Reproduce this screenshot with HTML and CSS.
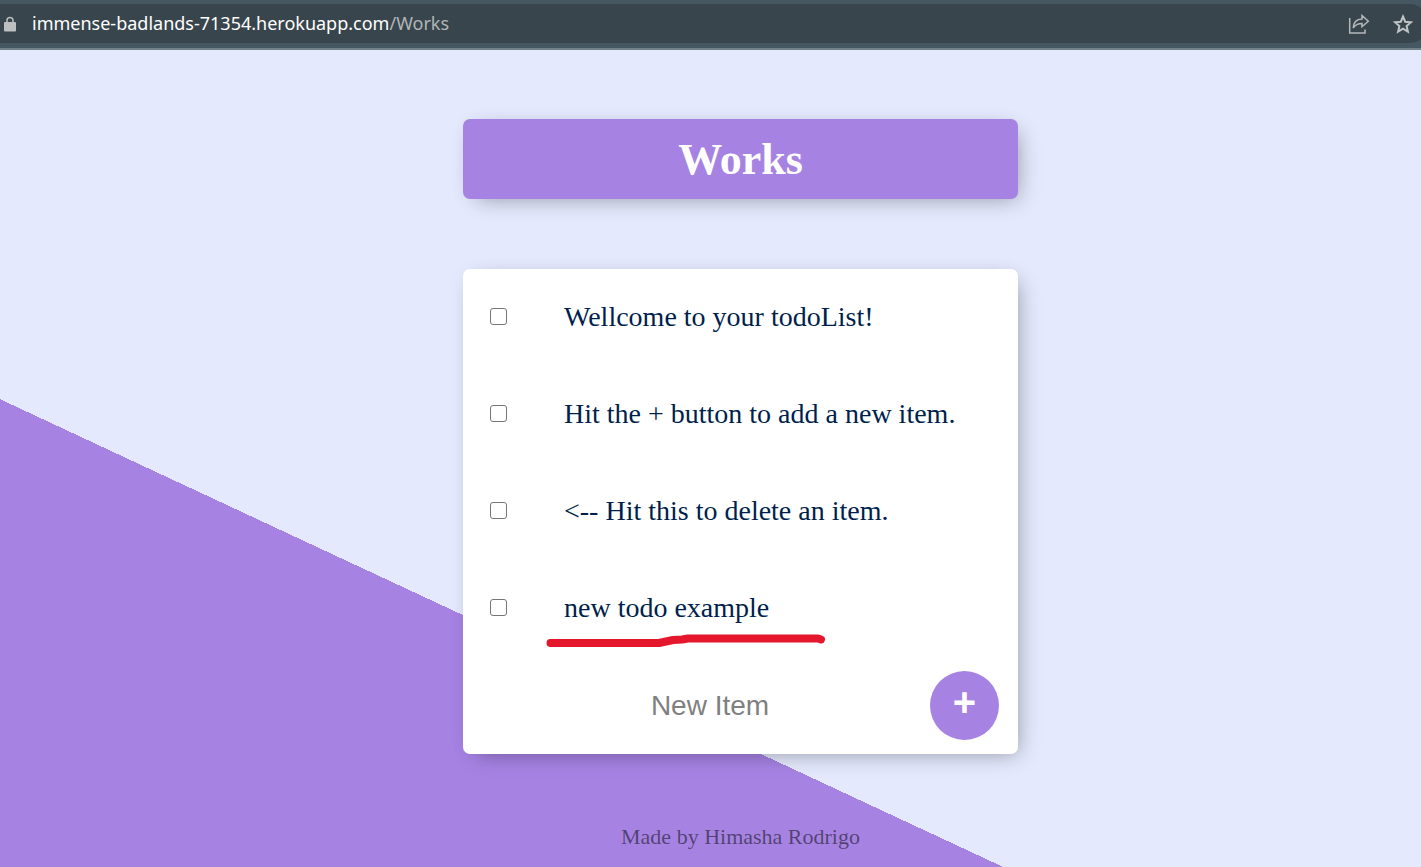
FILE: index.html
```html
<!DOCTYPE html>
<html lang="en">
<head>
<meta charset="utf-8">
<title>Works</title>
<link rel="stylesheet" href="styles.css">
</head>
<body>
<header class="browser">
  <div class="address">
    <svg class="lock" viewBox="0 0 12 16" aria-hidden="true"><path d="M3 7V4.500a3 3 0 0 1 6 0V7" fill="none" stroke="#b9bdbf" stroke-width="1.500"/><rect x="0" y="6" width="12" height="9.500" rx="1" fill="#bdbfc1"/></svg>
    <span class="url">immense-badlands-71354.herokuapp.com<span class="path">/Works</span></span>
    <button class="tool" type="button" aria-label="Share"><svg viewBox="0 0 22 22" fill="none" stroke="#b4b8ba" stroke-width="1.500"><path d="M1.700 5V20H17V16.500"/><path d="M14 2.500l6.300 5.800-6.300 5.400v-3.200c-4 0-6.800 1.200-8.700 4.500C5.500 9.500 8.500 6.200 14 6z"/></svg></button>
    <button class="tool" type="button" aria-label="Bookmark"><svg viewBox="0 0 22 22" fill="none" stroke="#c0c3c5" stroke-width="2"><path d="M11 3.500l2.200 5.200 5.700.5-4.300 3.800 1.300 5.600L11 15.700l-4.900 2.900 1.300-5.600-4.300-3.800 5.700-.5z"/></svg></button>
  </div>
</header>
<main class="page">
  <div class="box heading"><h1>Works</h1></div>
  <div class="box list">
    <label class="item"><input type="checkbox"><span>Wellcome to your todoList!</span></label>
    <label class="item"><input type="checkbox"><span>Hit the + button to add a new item.</span></label>
    <label class="item"><input type="checkbox"><span>&lt;-- Hit this to delete an item.</span></label>
    <label class="item"><input type="checkbox"><span>new todo example</span>
      <svg class="marker" viewBox="0 0 280 16" aria-hidden="true"><path d="M4.500 11H113L127 8L136 7.500L142 6.500H272L275 7.500" fill="none" stroke="#e5172c" stroke-width="8" stroke-linecap="round" stroke-linejoin="round"/></svg>
    </label>
    <form class="add">
      <input type="text" placeholder="New Item" aria-label="New Item" autocomplete="off">
      <button type="button">+</button>
    </form>
  </div>
  <footer>Made by Himasha Rodrigo</footer>
</main>
</body>
</html>
```
FILE: styles.css
```css
* { box-sizing: border-box; }
body {
  margin: 0;
  min-height: 100vh;
  display: flex;
  flex-direction: column;
  font-family: "Liberation Serif", "Times New Roman", serif;
  overflow: hidden;
}
.browser {
  padding: 4px 0 5px;
  background: #455861;
  border-bottom: 2px solid #72818a;
}
.address {
  display: flex;
  align-items: center;
  height: 39px;
  margin-right: -8px;
  padding: 0 15px 0 4px;
  background: #38454c;
  border-radius: 0 20px 20px 0;
}
.lock { width: 12px; height: 16px; margin-right: 16px; }
.url {
  flex: 1;
  padding-bottom: 2px;
  font-family: "Noto Sans", "Open Sans", sans-serif;
  font-size: 18px;
  line-height: 24px;
  color: #fff;
}
.path { color: #b0b5b8; }
.tool {
  width: 22px;
  height: 22px;
  margin-left: 22px;
  padding: 0;
  border: 0;
  background: none;
}
.tool svg { display: block; }
/* The page is wider than the window by 60px, so its centre sits to the right. */
.page {
  flex: 1;
  display: flex;
  flex-direction: column;
  align-items: center;
  margin-right: -60px;
  padding: 69px 0 16px;
  background: linear-gradient(25deg, #a683e3 50%, #e4e9fd 50%) 0 0 / 100% 1389px no-repeat;
}
.box {
  width: 555px;
  max-width: 100%;
  margin-bottom: 70px;
  background: #fff;
  border-radius: 7px;
  box-shadow: 7px 7px 21px -7px rgba(0, 0, 0, 0.3), 0 0 21px -7px rgba(0, 0, 0, 0.1);
}
.heading { background: #a683e3; text-align: center; }
h1 {
  margin: 0;
  padding-top: 2px;
  font-size: 44px;
  line-height: 78px;
  color: #fff;
}
.item {
  position: relative;
  display: flex;
  align-items: center;
  height: 97px;
  padding: 0 0 2px 27px;
  font-size: 28px;
  color: #001f4d;
}
.item input {
  appearance: none;
  width: 17px;
  height: 17px;
  margin: 0 57px 0 0;
  border: 1px solid #767676;
  border-radius: 3px;
  background: #fff;
}
.item input:checked { background: #a683e3; }
.marker { position: absolute; left: 83px; bottom: 9px; width: 280px; }
.add {
  display: flex;
  align-items: center;
  height: 97px;
  padding: 0 19px 0 27px;
}
.add input {
  flex: 1;
  min-width: 0;
  height: 83px;
  padding: 0;
  border: 0;
  outline: 0;
  background: transparent;
  text-align: center;
  font: 28px "Liberation Sans", Arial, sans-serif;
}
.add input::placeholder { color: #808080; }
.add button {
  width: 69px;
  height: 69px;
  padding: 0 0 8px;
  border: 0;
  border-radius: 50%;
  background: #a683e3;
  color: #fff;
  font: bold 40px/60px "Liberation Sans", Arial, sans-serif;
}
footer {
  color: rgba(0, 0, 0, 0.5);
  font-size: 22px;
  line-height: 26px;
}
```
